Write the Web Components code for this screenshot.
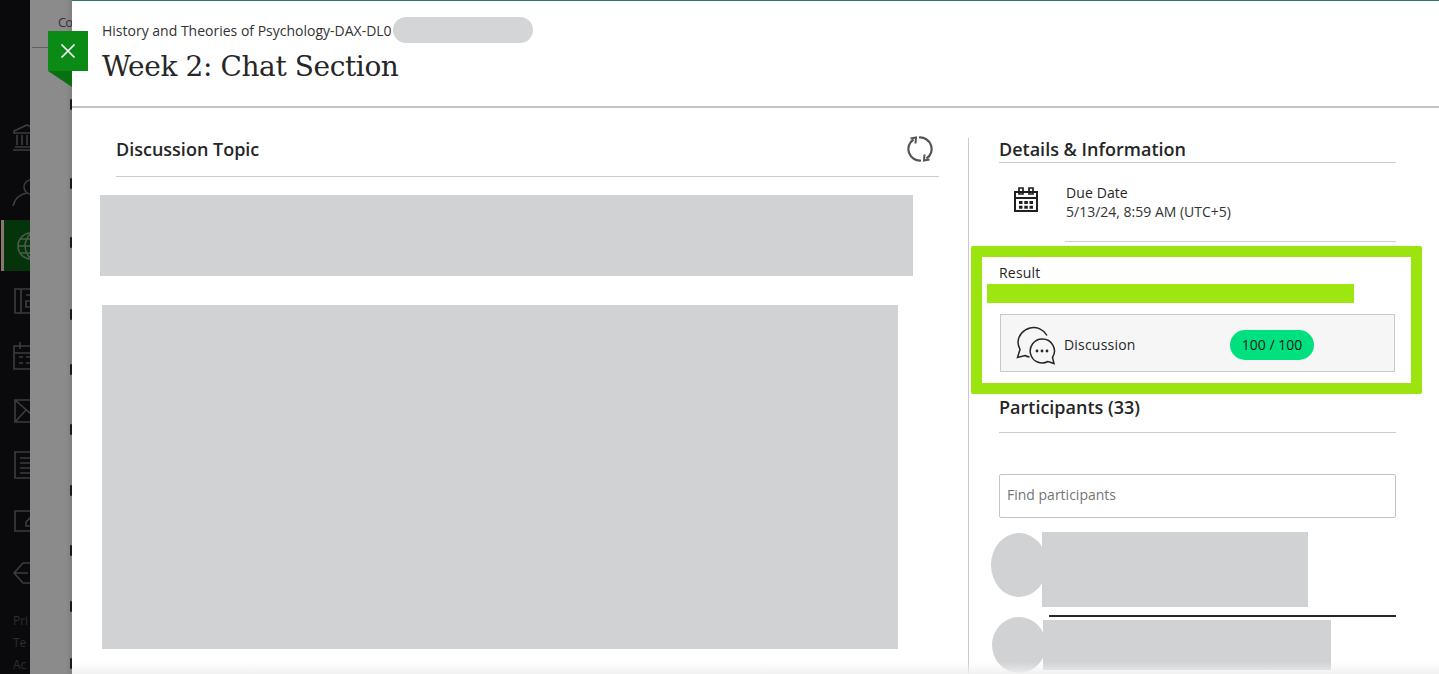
<!DOCTYPE html>
<html lang="en">
<head>
<meta charset="utf-8">
<title>Week 2: Chat Section</title>
<style>
    html, body { margin: 0; padding: 0; background: #fff; }
    body { font-family: "Open Sans", "Liberation Sans", sans-serif; color: #262626; }
</style>
</head>
<body>
<course-page>
    <course-rail slot="rail"></course-rail>
    <panel-header slot="header" course="History and Theories of Psychology-DAX-DL0">Week 2: Chat Section</panel-header>
    <discussion-topic slot="main"></discussion-topic>
    <side-details slot="side"></side-details>
</course-page>

<script>
((window) => {

    // small helper, every element gets the same open shadow setup
    class ShadowElement extends HTMLElement {
        constructor() {
            super();
            this.shadow = this.attachShadow({ mode: 'open' });
        }
        connectedCallback() {
            this.render();
        }
    }

    class CoursePage extends ShadowElement {
        render() {
            this.shadow.innerHTML = `
            <style>
                :host { display: block; position: relative; width: 1439px; height: 674px; overflow: hidden; background: #fff; }
                .layout { display: flex; height: 100%; }
                .panel { flex: 1; display: flex; flex-direction: column; min-width: 0; background: #fff; border-top: 1px solid #1f7a68; box-sizing: border-box; box-shadow: -2px 0 4px rgba(0,0,0,.12); }
                .content { flex: 1; display: flex; min-height: 0; }
                .main { width: 896px; flex: none; padding: 30px 29px 0 44px; box-sizing: border-box; }
                .side { flex: 1; margin-top: 30px; border-left: 1px solid #c9c9c9; padding-left: 30px; padding-right: 43px; min-width: 0; }
                .fade { position: absolute; left: 72px; right: 0; bottom: 0; height: 12px; background: linear-gradient(rgba(245,245,245,0), rgba(240,240,240,.9)); }
                .ring { position: absolute; left: 971px; top: 246px; width: 451px; height: 148px; box-sizing: border-box; border: 11px solid #9be40f; border-radius: 2px; }
                .bar { position: absolute; left: 987px; top: 284px; width: 367px; height: 19px; background: #9ee60f; }
            </style>
            <div class="layout">
                <slot name="rail"></slot>
                <div class="panel">
                    <slot name="header"></slot>
                    <div class="content">
                        <div class="main"><slot name="main"></slot></div>
                        <div class="side"><slot name="side"></slot></div>
                    </div>
                </div>
            </div>
            <close-flag></close-flag>
            <div class="ring"></div>
            <div class="bar"></div>
            <div class="fade"></div>`;
        }
    }

    class CourseRail extends ShadowElement {
        render() {
            const icons = [
                '<path d="M2 9 15 3l13 6v2H2zM5 13v10M10 13v10M15 13v10M20 13v10M25 13v10M3 25h24M1 28h28"/>',
                '<circle cx="19" cy="10" r="7"/><path d="M1 29c2-8 8-12 14-13"/>',
                '<circle cx="19" cy="15" r="13"/><path d="M6 15h26M19 2c-8 8-8 18 0 26M19 2c8 8 8 18 0 26M8 8h22M8 22h22"/>',
                '<path d="M3 3h32v24H3zM9 3v24M14 9h16M14 15h6v6h-6z"/>',
                '<path d="M2 6h32v23H2zM2 13h32M8 2v7M26 2v7M7 17h4M14 17h4M21 17h4M7 23h4M14 23h4M21 23h4"/>',
                '<path d="M3 5h32v22H3zM3 5l16 14L35 5M3 27l11-12"/>',
                '<path d="M3 3h30v26H3zM8 9h20M8 14h20M8 19h20M8 24h12"/>',
                '<path d="M3 7h26v20H3zM14 18 28 4l4 4-14 14h-4z"/>',
                '<path d="M2 15 11 5h20v20H11zM2 15h14"/>'
            ];
            this.shadow.innerHTML = `
            <style>
                :host { display: flex; flex: none; width: 72px; height: 100%; background: #8b8b8b; }
                .nav { width: 30px; background: #0a0a0d; overflow: hidden; display: flex; flex-direction: column; padding-top: 110px; box-sizing: border-box; }
                .item { height: 54.5px; flex: none; display: flex; align-items: center; padding-left: 12px; box-sizing: border-box; }
                .item.on { background: linear-gradient(90deg, #0a0a0d 0 1px, #8a7570 1px 4px, #05340a 4px); height: 51px; margin: 1px 0 2.5px; }
                svg { width: 36px; height: 30px; flex: none; fill: none; stroke: #3d3d3d; stroke-width: 1.6; }
                .on svg { stroke: #4a5c4c; }
                .legal { margin-top: 9px; padding-left: 13px; font-size: 12px; line-height: 22px; color: #2e2e2e; white-space: nowrap; }
                .shade { flex: 1; position: relative; background: linear-gradient(90deg, #8b8b8b 85%, #7f7f7f); overflow: hidden; }
                .crumb { position: absolute; left: 28px; top: 13px; font-size: 13px; letter-spacing: -1px; color: #2f2f3a; }
                .rule { position: absolute; left: 2px; top: 47px; width: 20px; height: 1px; background: #5f5f5f; }
                .mark { position: absolute; left: 40px; width: 2px; height: 11px; background: #1a1a1a; border-radius: 1px; }
            </style>
            <div class="nav">
                ${icons.map((d, i) => `<div class="item ${i === 2 ? 'on' : ''}"><svg viewBox="0 0 36 30">${d}</svg></div>`).join('')}
                <div class="legal">Pri<br>Te<br>Ac</div>
            </div>
            <div class="shade">
                <span class="crumb">Co</span>
                <span class="rule"></span>
                ${[99, 178, 237, 309, 364, 424, 485, 545, 601, 658].map((y) => `<span class="mark" style="top:${y}px"></span>`).join('')}
            </div>`;
        }
    }

    class CloseFlag extends ShadowElement {
        render() {
            this.shadow.innerHTML = `
            <style>
                :host { display: block; position: absolute; left: 48px; top: 31px; width: 40px; height: 56px; }
                svg { display: block; }
            </style>
            <svg width="40" height="56" viewBox="0 0 40 56">
                <path d="M0 40 24 56V40z" fill="#0a6f12"/>
                <rect width="40" height="40" fill="#0b8a16"/>
                <path d="M13.5 13.5 26.5 26.5M26.5 13.5 13.5 26.5" stroke="#fff" stroke-width="1.7" fill="none"/>
            </svg>`;
        }
    }

    class PanelHeader extends ShadowElement {
        render() {
            this.shadow.innerHTML = `
            <style>
                :host { display: block; flex: none; height: 107px; box-sizing: border-box; padding: 18px 0 0 30px; border-bottom: 2px solid #c4c4c4; position: relative; }
                .course { display: flex; align-items: center; height: 22px; font-size: 14px; color: #333; }
                .blur { width: 140px; height: 26px; border-radius: 13px; background: #d4d5d6; margin-left: 1px; flex: none; }
                h1 { margin: 4px 0 0; font: 400 28px/44px "DejaVu Serif", "Liberation Serif", serif; letter-spacing: -.4px; color: #262626; }
            </style>
            <div class="course"><span>${this.getAttribute('course')}</span><span class="blur"></span></div>
            <h1><slot></slot></h1>`;
        }
    }

    class SectionHeading extends ShadowElement {
        render() {
            this.shadow.innerHTML = `
            <style>
                :host { display: flex; justify-content: space-between; align-items: center; box-sizing: border-box; height: 25px; padding-bottom: 2px; border-bottom: 1px solid #cdcdcd; font-size: 18px; font-weight: 600; color: #262626; }
            </style>
            <slot></slot><slot name="action"></slot>`;
        }
    }

    class DiscussionTopic extends ShadowElement {
        render() {
            this.shadow.innerHTML = `
            <style>
                :host { display: block; }
                section-heading { height: 39px; padding-bottom: 16px; }
                svg { display: block; margin-right: 6px; }
                .mask { background: #d1d2d3; }
                .one { margin: 18px 0 0 -16px; width: 813px; height: 81px; }
                .two { margin: 29px 0 0 -14px; width: 796px; height: 344px; }
            </style>
            <section-heading>Discussion Topic
                <svg slot="action" width="26" height="26" viewBox="0 0 26 26" fill="none" stroke="#555" stroke-width="2.2">
                    <path d="M14 24.5A11.500 11.500 0 0 1 6.500 3.500"/>
                    <path d="M12 1.500A11.500 11.500 0 0 1 19.500 22.500"/>
                    <path d="M3.500 2.500 9 1.500 8.500 7.500" stroke-width="2"/>
                    <path d="M22.500 23.500 17 24.500 17.500 18.500" stroke-width="2"/>
                </svg>
            </section-heading>
            <div class="mask one"></div>
            <div class="mask two"></div>`;
        }
    }

    class SideDetails extends ShadowElement {
        render() {
            this.shadow.innerHTML = `
            <style>
                :host { display: block; font-size: 14px; }
                .due { display: flex; margin-top: 20px; height: 59px; position: relative; }
                .due svg { flex: none; margin: 3px 0 0 14px; }
                .due div { margin-left: 26px; padding-left: 1px; flex: 1; border-bottom: 1px solid #cdcdcd; line-height: 19px; color: #333; }
                .due b { display: block; font-weight: 500; letter-spacing: .1px; color: #262626; }
                .label { margin-top: 23px; line-height: 16px; font-weight: 500; letter-spacing: .2px; color: #262626; }
                .result { margin: 33px 1px 0 1px; height: 58px; box-sizing: border-box; border: 1px solid #c9c9cc; background: #f6f6f7; display: flex; align-items: center; padding: 4px 0 0 15px; }
                .result svg { flex: none; }
                .result span { margin: -2px 0 0 8px; width: 166px; font-weight: 500; letter-spacing: .2px; color: #262626; }
                .pill { display: block; width: 84px; height: 30px; line-height: 30px; border-radius: 15px; background: #00e07f; text-align: center; font-weight: 500; font-style: normal; color: #1a1a1a; flex: none; }
                .people { margin-top: 23px; height: 38px; padding-bottom: 14px; }
                .find { display: block; box-sizing: border-box; width: 100%; height: 44px; margin-top: 41px; border: 1px solid #c4c4c4; border-radius: 2px; padding: 0 7px 3px; font: 400 14px "Open Sans", sans-serif; outline: none; }
                .find::placeholder { color: #757575; opacity: 1; }
                .person { display: flex; align-items: flex-start; margin-left: -8px; }
                .person i { display: block; flex: none; border-radius: 50%; background: #d1d2d3; }
                .person u { display: block; background: #d1d2d3; }
                .first { margin-top: 14px; }
                .first i { width: 56px; height: 64px; margin: 1px -5px 0 0; }
                .first u { width: 266px; height: 75px; }
                .sep { height: 2px; background: #262626; margin: 8px 0 0 50px; }
                .second i { width: 54px; height: 56px; margin: 0 -3px 0 1px; }
                .second u { width: 288px; height: 50px; margin-top: 3px; }
            </style>
            <section-heading>Details &amp; Information</section-heading>
            <div class="due">
                <svg width="26" height="26" viewBox="0 0 26 26" fill="none" stroke="#1f1f1f">
                    <path stroke-width="2" d="M2 6h22v19H2zM2 12h22"/>
                    <path stroke-width="1.7" d="M6 2h4v6H6zM16 2h4v6h-4z"/>
                    <path stroke-width="3" d="M6 16.500h3.500M11.300 16.500h3.500M16.500 16.500h3.500M6 21.200h3.500M11.300 21.200h3.500M16.500 21.200h3.500"/>
                </svg>
                <div><b>Due Date</b>5/13/24, 8:59 AM (UTC+5)</div>
            </div>
            <div class="label">Result</div>
            <div class="result">
                <svg width="40" height="40" viewBox="0 0 40 40" fill="none" stroke="#262626" stroke-width="1.500">
                    <path d="M31 10.500A15.500 15.500 0 0 0 2 17c0 3 1 5.500 2 7.500L1.500 32.500 9 30.500c1.500 .8 3 1.200 4.500 1.500"/>
                    <path d="M26 14a12 12 0 1 0 6 22.500L38 38.500 36.500 32.500A12 12 0 0 0 26 14z"/>
                    <path d="M21 26h.01M26 26h.01M31 26h.01" stroke-width="2.800" stroke-linecap="round"/>
                </svg>
                <span>Discussion</span>
                <em class="pill">100 / 100</em>
            </div>
            <section-heading class="people">Participants (33)</section-heading>
            <input class="find" placeholder="Find participants" aria-label="Find participants">
            <div class="person first"><i></i><u></u></div>
            <div class="sep"></div>
            <div class="person second"><i></i><u></u></div>`;
        }
    }

    window.customElements.define('section-heading', SectionHeading);
    window.customElements.define('close-flag', CloseFlag);
    window.customElements.define('course-rail', CourseRail);
    window.customElements.define('panel-header', PanelHeader);
    window.customElements.define('discussion-topic', DiscussionTopic);
    window.customElements.define('side-details', SideDetails);
    window.customElements.define('course-page', CoursePage);
})(window);
</script>
</body>
</html>
